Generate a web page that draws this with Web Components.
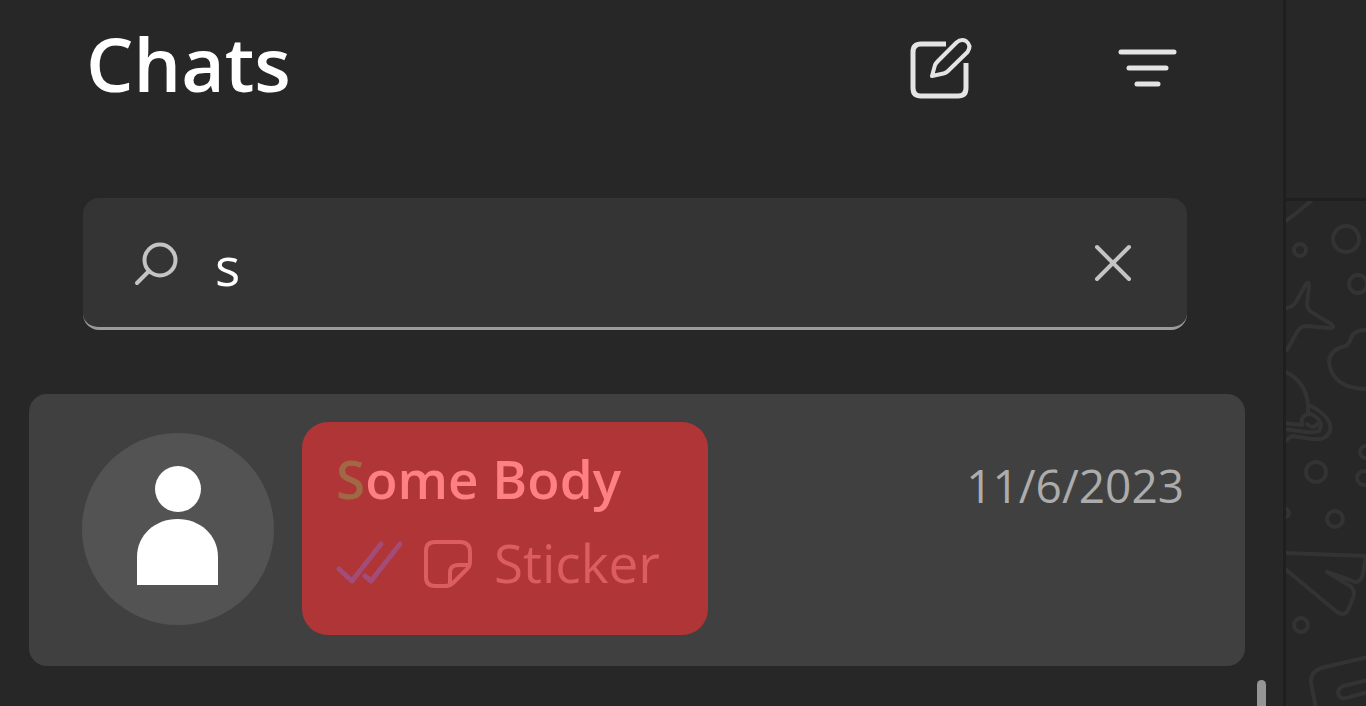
<!DOCTYPE html>
<html lang="en">
<head>
<meta charset="utf-8">
<title>Chats</title>
<style>
html, body { margin: 0; background: #272727; }
body { font-family: "Open Sans", "Noto Sans", sans-serif; color: #fff; }
</style>
</head>
<body>
<chat-app></chat-app>
<script>
const define = (name, html) => customElements.define(name, class extends HTMLElement {
  constructor() {
    super();
    const t = document.createElement('template');
    t.innerHTML = html;
    this.attachShadow({ mode: 'open' }).append(t.content.cloneNode(true));
  }
});

define('icon-button', `
<style>
:host { display: block; }
button { display: block; margin: 0; padding: 0; border: 0; background: none; color: inherit; }
</style>
<button type="button"><slot></slot></button>`);

define('chat-header', `
<style>
:host { display: flex; align-items: flex-end; gap: 144px; padding: 23px 103px 95px 86px; }
h1 { flex: 1; margin: 0; font-size: 75px; line-height: 80px; font-weight: 600; }
svg { display: block; width: 64px; height: 64px; overflow: visible; fill: none; stroke: #e4e4e4; stroke-linecap: round; stroke-linejoin: round; }
</style>
<h1>Chats</h1>
<icon-button><svg viewBox="0 0 64 64" role="img" aria-label="New chat">
<path d="M38 5H13Q5 5 5 13V49Q5 57 13 57H50Q58 57 58 49V24" stroke-width="5" stroke-linecap="butt"/>
<path d="M24 37L27 26Q28 24 30 22L48.500 3.500Q53 -0.500 58 2Q64 6.500 59.500 13L40 32Q38 34 35.500 34.500Z" stroke-width="4"/>
</svg></icon-button>
<icon-button><svg viewBox="0 0 64 64" role="img" aria-label="Filter chats" stroke-width="5">
<path d="M5 13H58M13 29H50M21 45H42"/>
</svg></icon-button>`);

define('chat-search', `
<style>
:host { display: flex; align-items: center; box-sizing: border-box; height: 132px; margin: 0 96px 64px 83px; padding: 3px 54px 0 50px; border-radius: 16px; border-bottom: 3px solid #9b9b9b; background: #343434; }
svg { display: block; width: 46px; height: 46px; fill: none; stroke: #c4c4c4; stroke-width: 4; stroke-linecap: round; }
.clear { width: 40px; height: 40px; }
input { flex: 1; min-width: 0; height: 80px; margin: 0 16px 0 36px; padding: 2px 0 0; box-sizing: border-box; border: 0; outline: 0; background: none; color: #fff; font: 500 53px/78px "Open Sans", "Noto Sans", sans-serif; }
</style>
<svg viewBox="0 0 46 46" aria-hidden="true"><circle cx="27" cy="19" r="15.500"/><path d="M16 30L4 42"/></svg>
<input type="text" value="s" aria-label="Search chats">
<icon-button><svg class="clear" viewBox="0 0 40 40" role="img" aria-label="Clear search"><path d="M4 3L36 35M36 3L4 35"/></svg></icon-button>`);

define('chat-item', `
<style>
:host { display: flex; align-items: center; padding: 28px 61px 31px 53px; border-radius: 18px; background: #404040; }
.avatar { flex: none; width: 192px; height: 192px; margin-right: 28px; border-radius: 50%; background: #535353; }
.summary { box-sizing: border-box; padding: 15px 48px 30px 34px; border-radius: 26px; background: #af3537; white-space: nowrap; }
.name { margin: 0; font-size: 53px; line-height: 84px; font-weight: 600; color: #ff8082; }
.last { display: flex; align-items: center; height: 84px; color: #dc5d60; font-size: 53px; line-height: 84px; }
.last svg { display: block; height: 52px; fill: none; stroke: currentColor; stroke-width: 4; stroke-linecap: round; stroke-linejoin: round; }
.ticks { width: 66px; margin-right: 20px; color: #a34c78; }
.sticker { width: 52px; margin-right: 20px; }
time { align-self: flex-start; margin: 35px 0 0 auto; font-size: 46px; line-height: 56px; color: #acacac; }
</style>
<svg class="avatar" viewBox="0 0 192 192" role="img" aria-label="Profile picture" fill="#fff"><circle cx="96" cy="56" r="23"/><path d="M55 152V124C55 102 73 86 95.500 86S136 102 136 124V152Z"/></svg>
<div class="summary">
  <h2 class="name"><slot name="match"></slot><slot name="name"></slot></h2>
  <div class="last">
    <svg class="ticks" viewBox="0 0 66 52" role="img" aria-label="Read"><path d="M3 32L16 44L45 7M29 39L35 44L64 7" stroke-width="5"/></svg>
    <svg class="sticker" viewBox="0 0 52 52" aria-hidden="true"><path d="M13 5H38Q48 5 48 15V25Q48 29 45 32L32 45Q28 49 24 49H13Q4 49 4 40V14Q4 5 13 5ZM47 28H36Q28 28 28 36V48"/></svg>
    <slot name="message"></slot>
  </div>
</div>
<time datetime="2023-11-06"><slot name="date"></slot></time>`);

define('chat-list', `
<style>
:host { display: grid; grid-template-columns: minmax(0, 1fr) 9px; column-gap: 12px; padding: 0 17px 0 29px; flex: 1; }
.thumb { margin-top: 286px; border-radius: 5px 5px 0 0; background: #959595; }
</style>
<div><slot></slot></div>
<div class="thumb"></div>`);

define('chat-wallpaper', `
<style>
:host { display: flex; flex-direction: column; border-left: 3px solid #1f1f1f; overflow: hidden; }
header { height: 198px; border-bottom: 3px solid #1f1f1f; }
svg { display: block; width: 80px; height: 505px; fill: none; stroke: #333; stroke-width: 4; stroke-linecap: round; stroke-linejoin: round; }
</style>
<header></header>
<svg viewBox="0 0 80 505" aria-hidden="true">
<path d="M-2 21L8 14L25 0"/>
<circle cx="14" cy="49" r="6"/><circle cx="60" cy="38" r="13"/><circle cx="72" cy="83" r="9"/>
<path d="M-2 107Q6 107 10 101L20 83Q23 79 23 86L21 103Q21 109 27 112L45 123Q50 127 43 127L20 125Q14 125 10 133L1 149L-2 150"/>
<path d="M80 129Q66 129 64 140Q62 145 56 146Q43 150 43 162Q47 188 82 188"/>
<path d="M-2 170Q20 180 22 204V212M23 204Q47 216 44 230Q40 240 26 238L6 235L-2 241M-2 222L16 224Q14 213 25 213Q39 220 33 230Q28 232 20 231L-2 228M21 223Q28 229 31 223"/>
<circle cx="30" cy="271" r="10"/><circle cx="49" cy="318" r="8"/><circle cx="80" cy="251" r="6"/><circle cx="78" cy="277" r="7"/><circle cx="-1" cy="312" r="4"/>
<path d="M-2 352L80 355L77 373Q74 385 64 379L41 371L59 382Q71 387 67 397L62 409Q58 416 51 411L-2 367"/>
<circle cx="15" cy="424" r="7"/>
<path d="M30 507L25 482Q24 471 35 467L82 456M82 479L57 485Q50 489 53 495Q56 499 64 496L82 491"/>
</svg>`);

define('chat-app', `
<style>
:host { display: grid; grid-template-columns: minmax(0, 1fr) 83px; height: 100vh; overflow: hidden; }
main { display: flex; flex-direction: column; min-width: 0; min-height: 0; }
mark { background: none; color: #a06845; font-weight: 600; }
</style>
<main>
  <chat-header></chat-header>
  <chat-search></chat-search>
  <chat-list>
    <chat-item><mark slot="match">S</mark><span slot="name">ome Body</span><span slot="message">Sticker</span><span slot="date">11/6/2023</span></chat-item>
  </chat-list>
</main>
<chat-wallpaper></chat-wallpaper>`);
</script>
</body>
</html>
